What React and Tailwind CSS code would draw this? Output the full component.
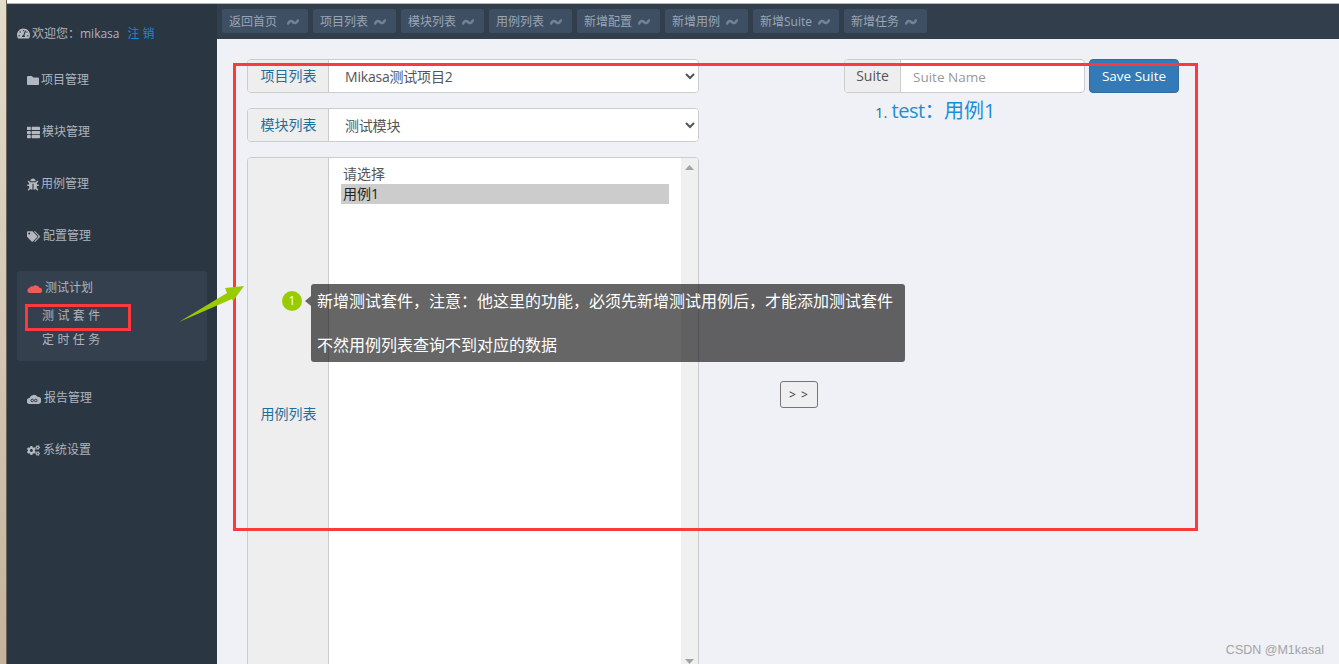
import React from "react";
import { FaTachometerAlt, FaFolder, FaThList, FaBug, FaTags, FaCogs } from "react-icons/fa";

const font = { fontFamily: '"Open Sans", "Noto Sans CJK SC", sans-serif' };

const navItems = [
  { label: "返回首页", width: "w-[86px]", gap: "ml-[10px]" },
  { label: "项目列表", width: "w-[83px]", gap: "ml-[6px]" },
  { label: "模块列表", width: "w-[83px]", gap: "ml-[6px]" },
  { label: "用例列表", width: "w-[83px]", gap: "ml-[6px]" },
  { label: "新增配置", width: "w-[83px]", gap: "ml-[6px]" },
  { label: "新增用例", width: "w-[83px]", gap: "ml-[6px]" },
  { label: "新增Suite", width: "w-[86px]", gap: "ml-[6px]" },
  { label: "新增任务", width: "w-[83px]", gap: "ml-[6px]" },
];

function Tilde() {
  return (
    <svg width="12" height="8" viewBox="0 0 12 8" className="shrink-0">
      <path d="M1.200 5.500C2.500 2.500 4.500 2.500 6 4s3.500 1.500 4.800-1.500" fill="none" stroke="#728398" strokeWidth="2.600" strokeLinecap="round" />
    </svg>
  );
}

// 报告管理 的云图标
function ReportCloud() {
  return (
    <svg width="14" height="11" viewBox="0 0 14 11">
      <path d="M3 11A3 3 0 0 1 2.500 5 4.500 4.500 0 0 1 10.500 3.800 3.600 3.600 0 0 1 11 11z" fill="#b4b8bf" />
      <circle cx="5.200" cy="7.500" r="1.300" fill="none" stroke="#2b3643" strokeWidth="1" />
      <circle cx="8.800" cy="7.500" r="1.300" fill="none" stroke="#2b3643" strokeWidth="1" />
    </svg>
  );
}

// 测试计划 的扁平红云
function RedCloud() {
  return (
    <svg width="16" height="9" viewBox="0 0 16 9">
      <path d="M2.500 9A2.500 2.500 0 0 1 2.300 4.100 3 3 0 0 1 6 2.500 4 4 0 0 1 12.500 3.800 2.700 2.700 0 0 1 13.500 9z" fill="#f05a5a" />
    </svg>
  );
}

function MenuItem({ icon, label, width }) {
  return (
    <div className="h-[52px] pl-5 flex items-center gap-[2px] text-xs text-[#aeb4bd]">
      <span className={`${width} flex text-[13px] text-[#b4b8bf]`}>{icon}</span>
      <span>{label}</span>
    </div>
  );
}

function Sidebar() {
  return (
    <aside className="w-[210px] shrink-0 bg-[#2b3643]">
      <div className="h-[50px] pt-[9px] pl-[10px] flex items-center text-xs text-[#aeb4bd]">
        <FaTachometerAlt className="text-[13px] text-[#b4b8bf] mr-[2px]" />
        <span>欢迎您：mikasa</span>
        <span className="ml-[8px] tracking-[3px] text-[#0d8ddb]">注销</span>
      </div>
      <MenuItem icon={<FaFolder />} label="项目管理" width="w-[12px]" />
      <MenuItem icon={<FaThList />} label="模块管理" width="w-[13px]" />
      <MenuItem icon={<FaBug />} label="用例管理" width="w-[12px]" />
      <MenuItem icon={<FaTags />} label="配置管理" width="w-[14px]" />
      <div className="mx-[10px] mt-[9px] mb-[11px] h-[90px] rounded-[3px] bg-[#35404e] pl-[10px] pt-[7px] text-xs">
        <div className="h-[20px] flex items-center gap-[2px] text-[#aeb4bd]">
          <RedCloud />
          <span>测试计划</span>
        </div>
        <div className="mt-[6px] ml-[15px] h-[24px] leading-[24px] tracking-[3.400px] text-[#aeb4bd]">测试套件</div>
        <div className="ml-[15px] h-[24px] leading-[24px] tracking-[3.400px] text-[#aeb4bd]">定时任务</div>
      </div>
      <MenuItem icon={<ReportCloud />} label="报告管理" width="w-[15px]" />
      <MenuItem icon={<FaCogs />} label="系统设置" width="w-[14px]" />
    </aside>
  );
}

function TopNav() {
  return (
    <nav className="h-[35px] shrink-0 bg-[#323e4c] pl-[5px] pt-[5px] flex gap-[5px] items-start">
      {navItems.map((item) => (
        <div key={item.label} className={`${item.width} h-[24px] rounded-[2px] bg-[#3e4e63] pl-[7px] pt-[1px] flex items-center text-xs text-[#9aa6b5]`}>
          <span>{item.label}</span>
          <span className={item.gap}><Tilde /></span>
        </div>
      ))}
    </nav>
  );
}

function SelectGroup({ label, value }) {
  return (
    <div className="h-[34px] flex rounded-[4px] border border-[#ccc] overflow-hidden bg-white">
      <div className="w-[81px] shrink-0 pl-[1px] bg-[#eee] border-r border-[#ccc] flex items-center justify-center text-sm text-[#1f6f9c]">{label}</div>
      <select defaultValue={value} className="flex-1 h-full pl-3 pr-1 bg-white text-sm tracking-[-0.200px] text-[#555] outline-none">
        <option>{value}</option>
      </select>
    </div>
  );
}

function CaseList() {
  return (
    <div className="h-[514px] flex rounded-[4px] border border-[#ccc] overflow-hidden bg-white">
      <div className="w-[81px] shrink-0 pl-[1px] bg-[#eee] border-r border-[#ccc] flex items-center justify-center text-sm text-[#1f6f9c]">用例列表</div>
      <div className="flex-1 pt-[6px] pl-3 pr-3 text-sm leading-[20px] text-[#555]">
        <div className="pl-[2px]">请选择</div>
        <div className="pl-[2px] bg-[#ccc] text-[#222]">用例1</div>
      </div>
      <div className="w-[17px] shrink-0 bg-[#f0f0f0] flex flex-col items-center justify-between pt-[7px] pb-[6px]">
        <svg width="9" height="5" viewBox="0 0 9 5"><path d="M4.500 0L9 5H0z" fill="#a3a3a3" /></svg>
        <svg width="9" height="5" viewBox="0 0 9 5"><path d="M4.500 5L9 0H0z" fill="#a3a3a3" /></svg>
      </div>
    </div>
  );
}

function SuitePanel() {
  return (
    <div className="ml-[26px] w-[335px]">
      <div className="flex gap-[4px]">
        <div className="w-[241px] h-[34px] flex rounded-[4px] border border-[#ccc] overflow-hidden bg-white">
          <div className="w-[56px] shrink-0 bg-[#eee] border-r border-[#ccc] flex items-center justify-center text-sm text-[#555]">Suite</div>
          <input placeholder="Suite Name" className="flex-1 min-w-0 pl-3 pt-[2px] text-[13.500px] text-[#555] placeholder:text-[#999] outline-none" />
        </div>
        <button className="w-[90px] h-[34px] pt-[1px] rounded-[4px] border border-[#2e6da4] bg-[#337ab7] text-[13.500px] text-white">Save Suite</button>
      </div>
      <div className="mt-[6px] ml-[31px] flex items-baseline text-[#1a8fd8]">
        <span className="text-[15px] text-[#31708f] mr-[4px]">1.</span>
        <span className="text-[20px] leading-[24px] tracking-[-0.500px]">test：</span>
        <span className="text-[20px] leading-[24px]">用例1</span>
      </div>
    </div>
  );
}

export default function App() {
  return (
    <div style={font} className="relative w-[1339px] h-[664px] overflow-hidden flex bg-[#f0f1f6]">
      <div className="w-[7px] shrink-0 bg-gradient-to-b from-[#e3dccb] to-[#c4b39c] border-r border-[#6b6558]" />
      <div className="flex-1 min-w-0 flex flex-col">
        <div className="h-[4px] shrink-0 bg-white border-b border-[#b5b5b5]" />
        <div className="flex-1 min-h-0 flex">
          <Sidebar />
          <main className="flex-1 min-w-0 flex flex-col">
            <TopNav />
            <div className="pl-[30px] pt-[20px] flex items-start">
              <div className="w-[452px] shrink-0 flex flex-col gap-[15px]">
                <SelectGroup label="项目列表" value="Mikasa测试项目2" />
                <SelectGroup label="模块列表" value="测试模块" />
                <CaseList />
              </div>
              <div className="w-[119px] shrink-0 pl-[81px] pt-[322px] flex">
                <button className="w-[38px] h-[27px] rounded-[3px] border border-[#767676] bg-[#efeff2] text-[12px] text-[#333] tracking-[1px]">&gt; &gt;</button>
              </div>
              <SuitePanel />
            </div>
          </main>
        </div>
      </div>

      {/* 标注层 */}
      <div className="absolute left-[233px] top-[63px] w-[965px] h-[468px] border-[3px] border-[#fb3a3e] pointer-events-none" />
      <div className="absolute left-[25px] top-[304px] w-[106px] h-[27px] border-[3px] border-[#fb3a3e] pointer-events-none" />
      <svg className="absolute left-[175px] top-[282px]" width="72" height="44" viewBox="175 282 72 44">
        <polygon points="179,322 227,293 225,288 244,286 233,301 232,299" fill="#99cc00" />
      </svg>
      <div className="absolute left-[282px] top-[291px] w-[20px] h-[20px] rounded-full bg-[#99cc00] flex items-center justify-center text-[12px] text-white">1</div>
      <div className="absolute left-[305px] top-[296px] w-0 h-0 border-y-[5px] border-y-transparent border-r-[6px] border-r-[#666]" />
      <div className="absolute left-[311px] top-[284px] w-[594px] h-[78px] rounded-[3px] bg-black/60 pl-[6px] flex flex-col gap-[10px] text-[16px] leading-[34px] text-white">
        <div>新增测试套件，注意：他这里的功能，必须先新增测试用例后，才能添加测试套件</div>
        <div>不然用例列表查询不到对应的数据</div>
      </div>
      <div className="absolute right-[15px] top-[641px] text-[12.500px] text-[#a3a3a6]" style={{ fontFamily: '"Liberation Sans", sans-serif' }}>CSDN @M1kasal</div>
    </div>
  );
}
